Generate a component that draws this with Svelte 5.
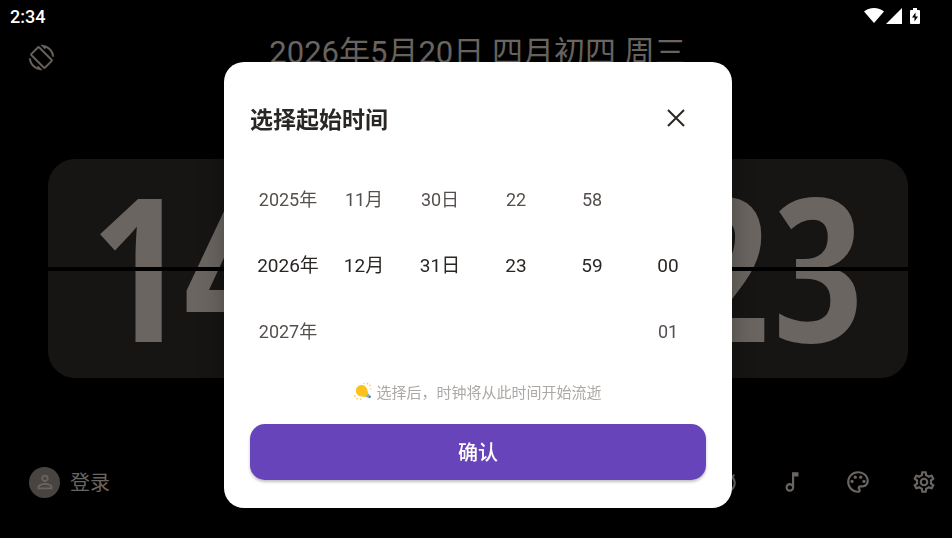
<script>
  let open = $state(true);
  let cards = $state(['14', '34', '23']);

  const pad = (n) => String(n).padStart(2, '0');

  let columns = $state([
    { name: '年', unit: '年', min: 2020, max: 2099, value: 2026 },
    { name: '月', unit: '月', min: 1, max: 12, value: 12 },
    { name: '日', unit: '日', min: 1, max: 31, value: 31 },
    { name: '时', unit: '', min: 0, max: 23, value: 23 },
    { name: '分', unit: '', min: 0, max: 59, value: 59 },
    { name: '秒', unit: '', min: 0, max: 59, value: 0 }
  ]);

  function label(col, offset) {
    const n = col.value + offset;
    if (n < col.min || n > col.max) return '';
    return pad(n) + col.unit;
  }

  function confirm() {
    cards = columns.slice(3).map((c) => pad(c.value));
    open = false;
  }
</script>

<div class="screen">
  <div class="status">
    <span class="status-time">2:34</span>
    <div class="status-icons">
      <svg width="20" height="15" viewBox="0 0 20 15"><path d="M10 15 0 3.600C2.600 1.300 6.100 0 10 0s7.400 1.300 10 3.600z" /></svg>
      <svg width="16" height="16" viewBox="0 0 16 16"><path d="M16 0v16H0z" /></svg>
      <svg class="battery" width="10" height="16" viewBox="0 0 10 16">
        <path d="M3 0h4v2h2a1 1 0 0 1 1 1v12a1 1 0 0 1-1 1H1a1 1 0 0 1-1-1V3a1 1 0 0 1 1-1h2z" />
        <path d="M5.500 4.500v4H8L4.500 13.500v-4H2z" fill="#000" />
      </svg>
    </div>
  </div>

  <header>
    <button class="icon-btn rotate" aria-label="旋转屏幕">
      <svg width="25" height="25" viewBox="0 0 24 24"><path d="M16.480 2.520c3.270 1.550 5.610 4.720 5.970 8.480h1.500C23.440 4.840 18.290 0 12 0l-.66.03 3.810 3.810 1.330-1.320zm-6.250-.77c-.59-.59-1.540-.59-2.120 0L1.750 8.110c-.59.59-.59 1.540 0 2.120l12.020 12.020c.59.59 1.540.59 2.120 0l6.360-6.360c.59-.59.59-1.540 0-2.120L10.230 1.750zm4.600 19.440L2.810 9.170l6.360-6.360 12.020 12.020-6.360 6.360zm-7.310.29C4.250 19.940 1.910 16.760 1.550 13H.05C.56 19.160 5.710 24 12 24l.66-.03-3.810-3.810-1.330 1.320z" /></svg>
    </button>
    <h1>2026年5月20日 四月初四 周三</h1>
  </header>

  <main>
    {#each cards as digits, i}
      <!-- the middle card sits fully behind the dialog while it is open -->
      <div class="card">{#if !open || i !== 1}{digits}{/if}</div>
    {/each}
  </main>

  <footer>
    <button class="login">
      <span class="avatar">
        <svg width="22" height="22" viewBox="0 0 24 24"><path d="M12 5.900a2.100 2.100 0 1 1 0 4.200 2.100 2.100 0 0 1 0-4.200m0 9c2.970 0 6.100 1.460 6.100 2.100v1.100H5.900V17c0-.64 3.130-2.100 6.100-2.100M12 4C9.790 4 8 5.790 8 8s1.790 4 4 4 4-1.790 4-4-1.790-4-4-4zm0 9c-2.670 0-8 1.340-8 4v3h16v-3c0-2.660-5.330-4-8-4z" /></svg>
      </span>
      登录
    </button>
    <nav>
      <button class="icon-btn" aria-label="计时器">
        <svg width="26" height="26" viewBox="0 0 24 24"><path d="M15 1H9v2h6V1zm-4 13h2V8h-2v6zm8.030-6.610 1.420-1.420c-.43-.51-.9-.99-1.410-1.410l-1.420 1.420C16.070 4.740 14.120 4 12 4c-4.970 0-9 4.030-9 9s4.020 9 9 9 9-4.030 9-9c0-2.120-.74-4.070-1.970-5.610zM12 20c-3.870 0-7-3.130-7-7s3.130-7 7-7 7 3.130 7 7-3.130 7-7 7z" /></svg>
      </button>
      <button class="icon-btn" aria-label="音乐">
        <svg width="26" height="26" viewBox="0 0 24 24"><path d="m12 3 .01 10.550c-.59-.34-1.270-.55-2-.55C7.790 13 6 14.790 6 17s1.790 4 4.010 4S14 19.210 14 17V7h4V3h-6zm-1.990 16c-1.100 0-2-.9-2-2s.9-2 2-2 2 .9 2 2-.9 2-2 2z" /></svg>
      </button>
      <button class="icon-btn" aria-label="主题">
        <svg width="26" height="26" viewBox="0 0 24 24">
          <path d="M12 22C6.490 22 2 17.510 2 12S6.490 2 12 2s10 4.040 10 9c0 3.310-2.690 6-6 6h-1.770c-.28 0-.5.22-.5.5 0 .12.05.23.13.33.41.47.64 1.060.64 1.670A2.500 2.500 0 0 1 12 22zm0-18c-4.410 0-8 3.590-8 8s3.590 8 8 8c.28 0 .5-.22.5-.5a.54.54 0 0 0-.14-.35c-.41-.46-.63-1.050-.63-1.650a2.500 2.500 0 0 1 2.500-2.500H16c2.210 0 4-1.790 4-4 0-3.860-3.590-7-8-7z" />
          <circle cx="6.500" cy="11.500" r="1.500" />
          <circle cx="9.500" cy="7.500" r="1.500" />
          <circle cx="14.500" cy="7.500" r="1.500" />
          <circle cx="17.500" cy="11.500" r="1.500" />
        </svg>
      </button>
      <button class="icon-btn" aria-label="设置">
        <svg width="26" height="26" viewBox="0 0 24 24"><path d="M19.430 12.980c.04-.32.07-.64.07-.98s-.03-.66-.07-.98l2.110-1.650c.19-.15.24-.42.12-.64l-2-3.460c-.09-.16-.26-.25-.44-.25-.06 0-.12.01-.17.03l-2.490 1c-.52-.4-1.080-.73-1.690-.98l-.38-2.650C14.460 2.180 14.250 2 14 2h-4c-.25 0-.46.18-.49.42l-.38 2.650c-.61.25-1.170.59-1.690.98l-2.490-1c-.06-.02-.12-.03-.18-.03-.17 0-.34.09-.43.25l-2 3.460c-.13.22-.07.49.12.64l2.110 1.650c-.04.32-.07.65-.07.98s.03.66.07.98l-2.110 1.650c-.19.15-.24.42-.12.64l2 3.460c.09.16.26.25.44.25.06 0 .12-.01.17-.03l2.490-1c.52.4 1.080.73 1.690.98l.38 2.650c.03.24.24.42.49.42h4c.25 0 .46-.18.49-.42l.38-2.650c.61-.25 1.170-.59 1.690-.98l2.490 1c.06.02.12.03.18.03.17 0 .34-.09.43-.25l2-3.460c.12-.22.07-.49-.12-.64l-2.110-1.650zm-1.980-1.710c.04.31.05.52.05.73s-.02.43-.05.73l-.14 1.130.89.7 1.080.84-.7 1.210-1.270-.51-1.040-.42-.9.68c-.43.32-.84.56-1.250.73l-1.060.43-.16 1.130-.2 1.350h-1.400l-.19-1.350-.16-1.130-1.060-.43c-.43-.18-.83-.41-1.230-.71l-.91-.7-1.060.43-1.270.51-.7-1.210 1.080-.84.89-.7-.14-1.130c-.03-.31-.05-.54-.05-.74s.02-.43.05-.73l.14-1.130-.89-.7-1.080-.84.7-1.210 1.270.51 1.040.42.9-.68c.43-.32.84-.56 1.250-.73l1.060-.43.16-1.130.2-1.350h1.390l.19 1.350.16 1.130 1.060.43c.43.18.83.41 1.230.71l.91.7 1.060-.43 1.270-.51.7 1.210-1.070.85-.89.7.14 1.130zM12 8c-2.210 0-4 1.790-4 4s1.790 4 4 4 4-1.790 4-4-1.790-4-4-4zm0 6c-1.100 0-2-.9-2-2s.9-2 2-2 2 .9 2 2-.9 2-2 2z" /></svg>
      </button>
    </nav>
  </footer>
</div>

{#if open}
  <div class="overlay">
    <div class="dialog" role="dialog" aria-modal="true" aria-labelledby="dialog-title">
      <div class="dialog-head">
        <h2 id="dialog-title">选择起始时间</h2>
        <button class="close" aria-label="关闭" onclick={() => (open = false)}>
          <svg width="18" height="18" viewBox="0 0 18 18"><path d="m1 1 16 16M17 1 1 17" /></svg>
        </button>
      </div>

      <div class="picker">
        {#each columns as col}
          <div class="wheel" role="group" aria-label={col.name}>
            {#each [-1, 0, 1] as offset}
              <button
                class="value"
                class:current={offset === 0}
                disabled={!label(col, offset)}
                onclick={() => (col.value += offset)}
              >{label(col, offset)}</button>
            {/each}
          </div>
        {/each}
      </div>

      <p class="hint">
        <svg width="18" height="20" viewBox="0 0 18 20">
          <path d="M2 7.500C3 3 8.500 1.600 11.600 4.700c2 2 1.800 4.300 3 7.300l-3 2.900c-2.600-.7-5.300.1-7.600-1.700C2.200 11.800 1.500 9.700 2 7.500z" fill="#fcc21b" />
          <path d="m14.300 11.800 2.200 2.200c.6 1.500-.7 2.600-2.200 2l-2.500-1.500z" fill="#82aebd" />
          <path d="m15 14.500 1.500-1 .2 1.700-1.400 1z" fill="#2f7889" />
          <g fill="#fdd45f">
            <circle cx="10" cy="1.500" r=".8" />
            <circle cx="13.500" cy="1.500" r=".9" />
            <circle cx="16" cy="3.500" r=".9" />
            <circle cx="16.800" cy="7" r=".8" />
            <circle cx="1" cy="14" r=".9" />
            <circle cx="3" cy="16.500" r=".9" />
            <circle cx="6.800" cy="17.300" r=".9" />
          </g>
        </svg>
        选择后，时钟将从此时间开始流逝
      </p>

      <button class="confirm" onclick={confirm}>确认</button>
    </div>
  </div>
{/if}

<style>
  :global(body) {
    margin: 0;
    background: #000;
    font-family: Roboto, "Noto Sans CJK SC", sans-serif;
  }
  button {
    padding: 0;
    border: none;
    background: none;
    color: inherit;
    font: inherit;
    cursor: pointer;
  }
  svg {
    display: block;
    fill: currentColor;
    flex-shrink: 0;
  }
  .screen {
    display: flex;
    flex-direction: column;
    min-height: 100vh;
    color: #6a6561;
  }
  .status {
    display: flex;
    align-items: center;
    justify-content: space-between;
    height: 31px;
    padding: 0 32px 0 10px;
    color: #fff;
  }
  .status-time {
    font-size: 18px;
    font-weight: 500;
    line-height: 20px;
    padding-top: 2px;
  }
  .status-icons {
    display: flex;
    align-items: center;
    gap: 2px;
  }
  .battery {
    margin-left: 6px;
  }
  header {
    display: grid;
    grid-template-columns: 26px 1fr 26px;
    height: 52px;
    padding: 0 26px 0 29px;
  }
  .rotate svg {
    stroke: currentColor;
    stroke-width: 0.4;
    overflow: visible;
  }
  h1 {
    margin: 0;
    font-size: 31px;
    font-weight: 400;
    line-height: 44px;
    text-align: center;
    white-space: nowrap;
  }
  main {
    flex: 1;
    display: grid;
    grid-template-columns: repeat(3, 1fr);
    align-items: center;
    gap: 25px;
    padding: 0 44px 0 48px;
  }
  .card {
    position: relative;
    height: 219px;
    border-radius: 27px;
    background: #171513;
    font-family: "Liberation Sans Narrow", "Noto Sans ExtraCondensed", "Open Sans Condensed", "Noto Sans Mono CJK SC", Roboto, sans-serif;
    font-size: 200px;
    font-weight: 900;
    line-height: 212px;
    text-align: center;
  }
  .card::after {
    content: '';
    position: absolute;
    inset: 108px 0 auto;
    height: 4px;
    background: #000;
  }
  footer {
    display: flex;
    align-items: center;
    justify-content: space-between;
    height: 56px;
    padding: 0 15px 28px 29px;
  }
  .login,
  h2,
  .hint,
  .confirm {
    font-family: "Noto Sans CJK SC", Roboto, sans-serif;
  }
  .login {
    display: flex;
    align-items: center;
    gap: 10px;
    font-size: 20px;
    line-height: 28px;
  }
  .avatar {
    display: grid;
    place-items: center;
    width: 31px;
    height: 31px;
    border-radius: 50%;
    background: #494440;
  }
  nav {
    display: flex;
    gap: 40px;
  }
  .overlay {
    position: fixed;
    inset: 0;
    display: flex;
    align-items: center;
    justify-content: center;
    padding: 31px 0 0 4px;
  }
  .dialog {
    box-sizing: border-box;
    width: min(508px, 92vw);
    padding: 32px 26px 28px;
    border-radius: 20px;
    background: #fff;
    color: #2a2624;
    box-shadow: 0 8px 24px rgba(0, 0, 0, 0.3);
  }
  .dialog-head {
    display: flex;
    align-items: center;
    justify-content: space-between;
    height: 48px;
  }
  h2 {
    margin: 0;
    font-size: 23px;
    font-weight: 600;
    line-height: 28px;
  }
  .close {
    display: grid;
    place-items: center;
    width: 60px;
    height: 48px;
  }
  .close svg {
    fill: none;
    stroke: currentColor;
    stroke-width: 2;
  }
  .picker {
    display: grid;
    grid-template-columns: repeat(6, 1fr);
    margin-top: 24px;
  }
  .wheel {
    display: grid;
    grid-auto-rows: 66px;
  }
  .value {
    padding-top: 2px;
    color: #55504d;
    font-size: 18px;
    line-height: 20px;
  }
  .value.current {
    color: #2a2624;
    font-size: 19px;
  }
  .hint {
    display: flex;
    align-items: center;
    justify-content: center;
    gap: 4px;
    margin: 18px 0 0;
    color: #aca8a5;
    font-size: 15px;
    line-height: 20px;
  }
  .confirm {
    width: 100%;
    height: 56px;
    margin-top: 22px;
    border-radius: 15px;
    background: #6844ba;
    box-shadow: 0 2px 3px rgba(0, 0, 0, 0.25);
    color: #fff;
    font-size: 20px;
    font-weight: 500;
    line-height: 28px;
  }
</style>
